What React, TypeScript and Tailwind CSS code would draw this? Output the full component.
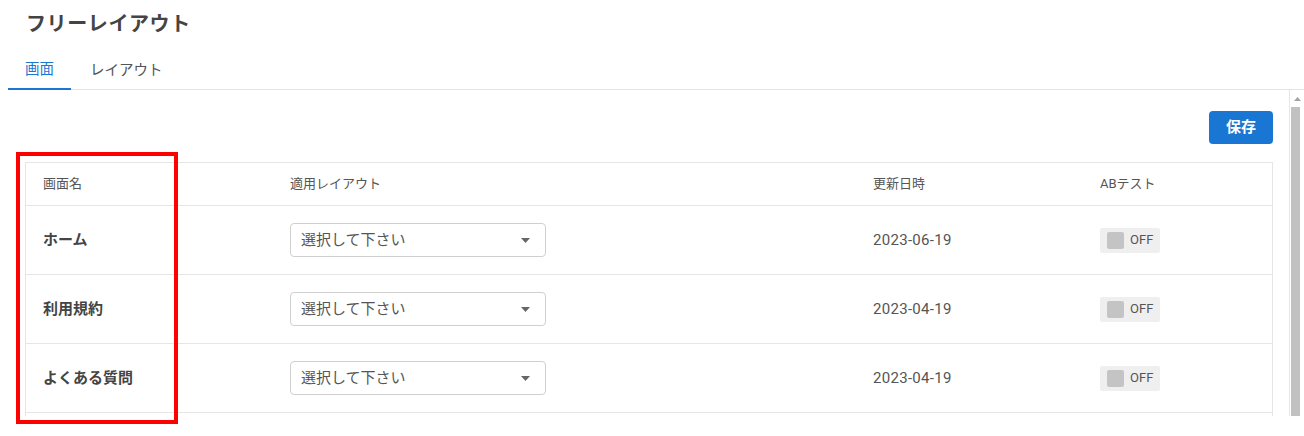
import React from "react";

const rows = [
  { name: "ホーム", date: "2023-06-19" },
  { name: "利用規約", date: "2023-04-19" },
  { name: "よくある質問", date: "2023-04-19" },
];

function Select() {
  return (
    <div className="flex h-[34px] w-[256px] items-center justify-between rounded-[4px] border border-[#cfcfcf] bg-white pl-[10px] pr-[15px]">
      <span className="text-[15px] text-[#555]">選択して下さい</span>
      <svg width="9" height="5" viewBox="0 0 9 5">
        <path d="M0 0 L9 0 L4.5 5 Z" fill="#666" />
      </svg>
    </div>
  );
}

function Toggle() {
  return (
    <div className="flex h-[25px] w-[60px] items-center gap-[6px] rounded-[2px] bg-[#efefef] pl-[7px]">
      <div className="h-[17px] w-[17px] rounded-[2px] bg-[#c4c4c4]" />
      <span className="text-[13px] text-[#555]">OFF</span>
    </div>
  );
}

export default function App() {
  return (
    <div
      className="relative h-[436px] w-[1304px] overflow-hidden bg-white"
      style={{ fontFamily: 'Roboto, "Noto Sans CJK JP", sans-serif' }}
    >
      <div className="h-[50px] pl-[26px] pt-[9px]">
        <h1 className="text-[20px] font-bold leading-[30px] tracking-[0.6px] text-[#444]">
          フリーレイアウト
        </h1>
      </div>
      <div className="ml-[8px] flex h-[40px] border-b border-[#e3e3e3]">
        <div className="flex h-[40px] items-center border-b-2 border-[#1976d2] px-[17px] pt-[1px] text-[14.5px] text-[#1976d2]">
          画面
        </div>
        <div className="flex h-[40px] items-center px-[19px] pt-[1px] text-[14.5px] text-[#555]">
          レイアウト
        </div>
      </div>
      <div className="ml-[8px] flex h-[326px]">
        <div className="flex-1 overflow-hidden pl-[17px] pr-[16px] pt-[21px]">
          <div className="flex justify-end">
            <button className="h-[33px] w-[64px] rounded-[4px] bg-[#1976d2] text-[15px] font-bold text-white">
              保存
            </button>
          </div>
          <div className="mt-[18px] border border-[#e6e6e6]">
            <div className="grid h-[43px] grid-cols-[247px_583px_227px_1fr] items-center border-b border-[#e6e6e6] text-[13px] text-[#555]">
              <div className="pl-[17px]">画面名</div>
              <div className="pl-[17px]">適用レイアウト</div>
              <div className="pl-[17px]">更新日時</div>
              <div className="pl-[17px]">ABテスト</div>
            </div>
            {[...rows, { name: "", date: "" }].map((r, i) => (
              <div
                key={i}
                className="grid h-[69px] grid-cols-[247px_583px_227px_1fr] items-center border-b border-[#e6e6e6]"
              >
                {r.name ? (
                  <>
                    <div className="pl-[17px] text-[15px] font-bold text-[#444]">{r.name}</div>
                    <div className="pl-[17px]">
                      <Select />
                    </div>
                    <div className="pl-[17px] text-[15px] tracking-[0.3px] text-[#555]">{r.date}</div>
                    <div className="pl-[17px]">
                      <Toggle />
                    </div>
                  </>
                ) : null}
              </div>
            ))}
          </div>
        </div>
        <div className="flex w-[15px] flex-col border-l border-[#e6e6e6] bg-white">
          <div className="flex h-[17px] items-center justify-center">
            <svg width="7" height="4" viewBox="0 0 7 4">
              <path d="M0 4 L3.5 0 L7 4 Z" fill="#a3a3a3" />
            </svg>
          </div>
          <div className="ml-[1px] w-[9px] flex-1 bg-[#c1c1c1]" />
        </div>
      </div>
      <div className="pointer-events-none absolute left-[16px] top-[152px] h-[272px] w-[162px] border-4 border-[#ff0000]" />
    </div>
  );
}
